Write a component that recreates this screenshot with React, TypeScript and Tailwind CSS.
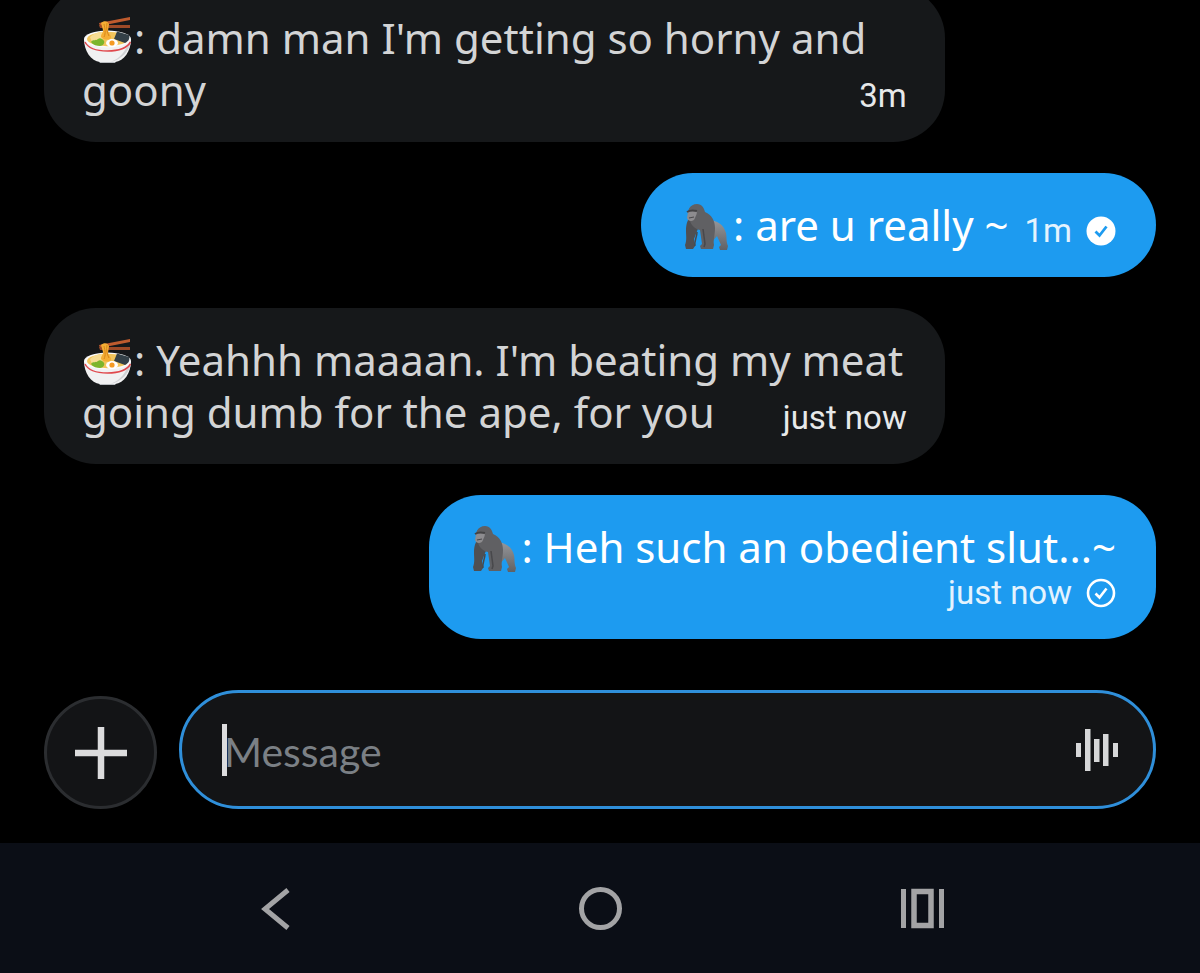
import React, { useState } from 'react';

type IconProps = { className?: string };

const NoodlesEmoji: React.FC<IconProps> = ({ className }) => (
  <svg viewBox="0 -3 52 50" className={className} role="img" aria-label="noodles">
    <path d="M15 42l3 4h15l3-4z" fill="#b9bcc0" />
    <path d="M2 22c0 12 7 22 16 23h15c9-1 16-11 16-23z" fill="#f1f1f2" />
    <path d="M28 45c12-2 20-12 21-21l-4 5c-3 8-10 14-17 16z" fill="#d0d2d5" />
    <ellipse cx="25.500" cy="22" rx="23.500" ry="8.500" fill="#fafafa" />
    <path d="M3 25c3 6 12 9 22.500 9S45 31 48.500 25" fill="none" stroke="#e0474c" strokeWidth="1.500" />
    <ellipse cx="25.500" cy="22" rx="20.500" ry="7.200" fill="#f2c55c" />
    <path d="M8 20c4-4 9-5 14-5l-2 9-10 1z" fill="#f7dc93" />
    <path d="M9 25c2-3 5-1 7-3s5 0 6 2-1 5-4 5-7-1-9-4z" fill="#7cb52c" />
    <path d="M35 14.500l12 3.500c1 3 0 6-4 8l-11-4z" fill="#344047" />
    <ellipse cx="30" cy="26" rx="6" ry="4" fill="#fff" />
    <circle cx="30" cy="26" r="2.600" fill="#f59a23" />
    <path d="M17 6l31-6v3L18 9z" fill="#bf5b2e" />
    <path d="M17 8h31v3H18z" fill="#9e4a27" />
    <path d="M19 6c3-3 7-2 8 1l-1 7c1 3 4 5 3 7s-6 2-9 0 2-6 1-8z" fill="#f5ae35" />
    <path d="M22 7c1 5 2 9 0 13M25 6c-1 5 0 9 2 13" fill="none" stroke="#d98719" strokeWidth="1" />
  </svg>
);

const GorillaEmoji: React.FC<IconProps> = ({ className }) => (
  <svg viewBox="0 -3 52 50" className={className} role="img" aria-label="gorilla">
    <defs>
      <linearGradient id="gorilla-back" x1="0" y1="0" x2="0" y2="1">
        <stop offset="0" stopColor="#96979a" />
        <stop offset="1" stopColor="#606164" />
      </linearGradient>
    </defs>
    <path d="M27 16c9 0 16 5 18 13 1 6 0 8 2 13l-1 4h-7l-1-3 2-2-4-9-7 8 2 5h-7z" fill="url(#gorilla-back)" />
    <path d="M10 12c-4 4-5 9-5 15 0 5 1 9-1 14l1 4h7l2-3-1-7 5-13z" fill="#4f4f52" />
    <path d="M8 13c-3-6 1-13 8-13 5 0 7 4 8 8 7 3 10 9 10 16 0 7-2 12-1 17l-1 4H20l-1-3 2-2-2-14c-6-1-10-6-11-13z" fill="#606063" />
    <path d="M22 25l2 15-1 3M16 28c0 5-3 9-2 14" fill="none" stroke="#48484b" strokeWidth="1.500" />
    <path d="M7 8c2-2 5-1 8-2 2 3 0 5-1 8-1 4-7 4-8 0z" fill="#8d8c8f" />
    <path d="M6 8c3-2 6-2 10-1" fill="none" stroke="#434345" strokeWidth="2" />
    <path d="M8 14l5-1" fill="none" stroke="#4a4a4d" strokeWidth="1.200" />
  </svg>
);

const SeenIcon: React.FC<IconProps> = ({ className }) => (
  <svg viewBox="0 0 30 30" className={className} fill="none" aria-label="seen">
    <circle cx="15" cy="15" r="14.500" fill="white" />
    <path d="M9.500 15.500l4 4 7-9" stroke="#1d9bf0" strokeWidth="2.800" />
  </svg>
);

const SentIcon: React.FC<IconProps> = ({ className }) => (
  <svg viewBox="0 0 30 30" className={className} fill="none" stroke="white" aria-label="sent">
    <circle cx="15" cy="15" r="13" strokeWidth="2.600" />
    <path d="M9.500 15.500l4 4 7-9" strokeWidth="2.600" />
  </svg>
);

const VoiceIcon: React.FC<IconProps> = ({ className }) => (
  <svg viewBox="0 0 44 44" className={className} fill="#d6d7d8" aria-hidden="true">
    <rect x="1" y="15" width="5" height="14" />
    <rect x="10" y="1" width="5.500" height="42" />
    <rect x="19" y="11" width="5.500" height="23" />
    <rect x="28" y="6" width="5.500" height="32" />
    <rect x="38" y="15" width="5" height="14" />
  </svg>
);

interface Message {
  id: number;
  mine: boolean;
  text: string;
  time: string;
  status?: 'seen' | 'sent';
  timeBelow?: boolean;
}

const messages: Message[] = [
  { id: 1, mine: false, text: "damn man I'm getting so horny and goony", time: '3m' },
  { id: 2, mine: true, text: 'are u really ~', time: '1m', status: 'seen' },
  { id: 3, mine: false, text: "Yeahhh maaaan. I'm beating my meat going dumb for the ape, for you", time: 'just now' },
  { id: 4, mine: true, text: 'Heh such an obedient slut...~', time: 'just now', status: 'sent', timeBelow: true },
];

const Bubble: React.FC<{ message: Message }> = ({ message }) => {
  const { mine, text, time, status, timeBelow } = message;
  const Emoji = mine ? GorillaEmoji : NoodlesEmoji;

  return (
    <li
      className={`shrink-0 rounded-[52px] py-[26px] text-[42px] leading-[52px] ${
        mine ? 'self-end bg-[#1d9bf0] px-10 text-white' : 'w-[81%] self-start bg-[#16181a] px-[38px] text-[#d3d4d5]'
      }`}
    >
      <Emoji className="inline-block h-[50px] w-[52px] align-[-10px]" />
      {`: ${text}`}
      <span
        className={`flex items-center gap-[14px] font-['Roboto',sans-serif] text-[33px] leading-[40px] ${
          timeBelow ? 'justify-end' : 'float-right ml-4 h-[52px] pt-3'
        } ${mine ? 'text-[#e4f3fe]' : 'text-[#e7e9ea]'}`}
      >
        {time}
        {status === 'seen' && <SeenIcon className="size-[30px]" />}
        {status === 'sent' && <SentIcon className="size-[30px]" />}
      </span>
    </li>
  );
};

const Composer: React.FC = () => {
  const [draft, setDraft] = useState('');

  return (
    <form className="mt-[51px] flex shrink-0 items-end gap-[22px]" onSubmit={(e) => e.preventDefault()}>
      <button
        type="button"
        aria-label="Add attachment"
        className="flex size-[113px] shrink-0 items-center justify-center rounded-full border-3 border-[#2b2d30] bg-[#131416]"
      >
        <svg viewBox="0 0 52 52" className="size-[52px]" stroke="#dcdcdd" strokeWidth="6.500" aria-hidden="true">
          <path d="M26 0v52M0 26h52" />
        </svg>
      </button>
      <div className="flex h-[119px] flex-1 items-center rounded-full border-3 border-[#2f8fda] bg-[#131416] pr-[34px] pl-10">
        <div className="relative flex min-w-0 flex-1 items-center">
          <input
            type="text"
            aria-label="Message"
            placeholder="Message"
            value={draft}
            onChange={(e) => setDraft(e.target.value)}
            className="w-full bg-transparent pt-1 pl-0.5 font-['Lato',sans-serif] text-[41px] text-[#d3d4d5] caret-transparent outline-none placeholder:text-[#7b8085]"
          />
          {draft === '' && <span className="absolute left-0 h-[52px] w-[5px] bg-[#dcdcdd]" />}
        </div>
        <button type="button" aria-label="Record voice message">
          <VoiceIcon className="size-11" />
        </button>
      </div>
    </form>
  );
};

const SystemNav: React.FC = () => (
  <nav className="flex h-[130px] shrink-0 items-center justify-center gap-[278px] bg-[#0b0e16]">
    <button type="button" aria-label="Back">
      <svg viewBox="0 0 44 44" className="size-11" fill="none" stroke="#a3a3a5" strokeWidth="5">
        <path d="M32 4L9 23l23 19" />
      </svg>
    </button>
    <button type="button" aria-label="Home">
      <svg viewBox="0 0 44 44" className="size-11" fill="none" stroke="#a3a3a5" strokeWidth="5">
        <circle cx="22.500" cy="22.500" r="19" />
      </svg>
    </button>
    <button type="button" aria-label="Recent apps">
      <svg viewBox="0 0 44 44" className="size-11" fill="none" stroke="#a3a3a5">
        <path d="M3.500 3v39M41.500 3v39" strokeWidth="5" />
        <path d="M14 5.500h17v34H14z" strokeWidth="5.500" />
      </svg>
    </button>
  </nav>
);

export default function App() {
  return (
    <div className="flex h-screen flex-col overflow-hidden bg-black font-['Noto_Sans',sans-serif]">
      <main className="flex min-h-0 flex-1 flex-col justify-end overflow-hidden px-[44px] pb-[34px]">
        <ul className="flex flex-col gap-[31px]">
          {messages.map((message) => (
            <Bubble key={message.id} message={message} />
          ))}
        </ul>
        <Composer />
      </main>
      <SystemNav />
    </div>
  );
}
